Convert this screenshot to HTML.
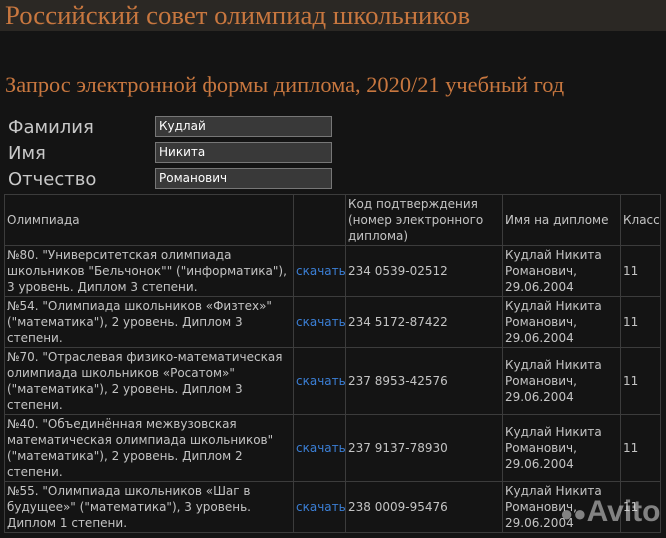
<!DOCTYPE html>
<html><head><meta charset="utf-8"><style>
body{margin:0;background:#141414;width:666px;height:538px;overflow:hidden;position:relative;font-family:"DejaVu Sans","Liberation Sans",sans-serif;color:#c4c4c4}
.hdr{position:absolute;left:0;top:0;width:666px;height:31px;background:#2b2824}
.t1{position:absolute;left:5px;top:0px;font:26.8px "Liberation Serif",serif;color:#c8773f;white-space:nowrap}
.t2{position:absolute;left:5px;top:72px;font:22.4px "Liberation Serif",serif;color:#c8773f;white-space:nowrap}
.lb{position:absolute;left:8px;font-size:18px;color:#c8c8c8}
.in{position:absolute;left:155px;background:#393939;border:1px solid #777;font-size:12px;color:#fff;line-height:19px;padding-left:3px;box-sizing:border-box;width:177px;height:21px}
table{position:absolute;left:4px;top:194px;border-collapse:collapse;font-size:12px;line-height:16px;width:656px;table-layout:fixed}
td{border:1px solid #3c3c3c;padding:0 2px;vertical-align:middle;white-space:nowrap;overflow:hidden}
a{color:#3b7fd6;text-decoration:none}
</style></head><body>
<div class="hdr"></div>
<div class="t1">Российский совет олимпиад школьников</div>
<div class="t2">Запрос электронной формы диплома, 2020/21 учебный год</div>
<div class="lb" style="top:117px">Фамилия</div>
<div class="lb" style="top:143px">Имя</div>
<div class="lb" style="top:169px">Отчество</div>
<div class="in" style="top:116px">Кудлай</div>
<div class="in" style="top:142px">Никита</div>
<div class="in" style="top:168px">Романович</div>
<table>
<colgroup><col style="width:289px"><col style="width:52px"><col style="width:157px"><col style="width:118px"><col style="width:40px"></colgroup>
<tr style="height:51px"><td>Олимпиада</td><td></td><td>Код подтверждения<br>(номер электронного<br>диплома)</td><td>Имя на дипломе</td><td>Класс</td></tr>
<tr style="height:51px"><td>№80. "Университетская олимпиада<br>школьников "Бельчонок"" ("информатика"),<br>3 уровень. Диплом 3 степени.</td><td><a>скачать</a></td><td>234 0539-02512</td><td>Кудлай Никита<br>Романович,<br>29.06.2004</td><td>11</td></tr>
<tr style="height:51px"><td>№54. "Олимпиада школьников «Физтех»"<br>("математика"), 2 уровень. Диплом 3<br>степени.</td><td><a>скачать</a></td><td>234 5172-87422</td><td>Кудлай Никита<br>Романович,<br>29.06.2004</td><td>11</td></tr>
<tr style="height:67px"><td>№70. "Отраслевая физико-математическая<br>олимпиада школьников «Росатом»"<br>("математика"), 2 уровень. Диплом 3<br>степени.</td><td><a>скачать</a></td><td>237 8953-42576</td><td>Кудлай Никита<br>Романович,<br>29.06.2004</td><td>11</td></tr>
<tr style="height:67px"><td>№40. "Объединённая межвузовская<br>математическая олимпиада школьников"<br>("математика"), 2 уровень. Диплом 2<br>степени.</td><td><a>скачать</a></td><td>237 9137-78930</td><td>Кудлай Никита<br>Романович,<br>29.06.2004</td><td>11</td></tr>
<tr style="height:51px"><td>№55. "Олимпиада школьников «Шаг в<br>будущее»" ("математика"), 3 уровень.<br>Диплом 1 степени.</td><td><a>скачать</a></td><td>238 0009-95476</td><td>Кудлай Никита<br>Романович,<br>29.06.2004</td><td>11</td></tr>
</table>
<div style="position:absolute;left:560px;top:495px;font:bold 30px 'Liberation Sans',sans-serif;color:rgba(220,220,220,.55)"><span style="font-size:22px">●●</span>Avito</div>
</body></html>
